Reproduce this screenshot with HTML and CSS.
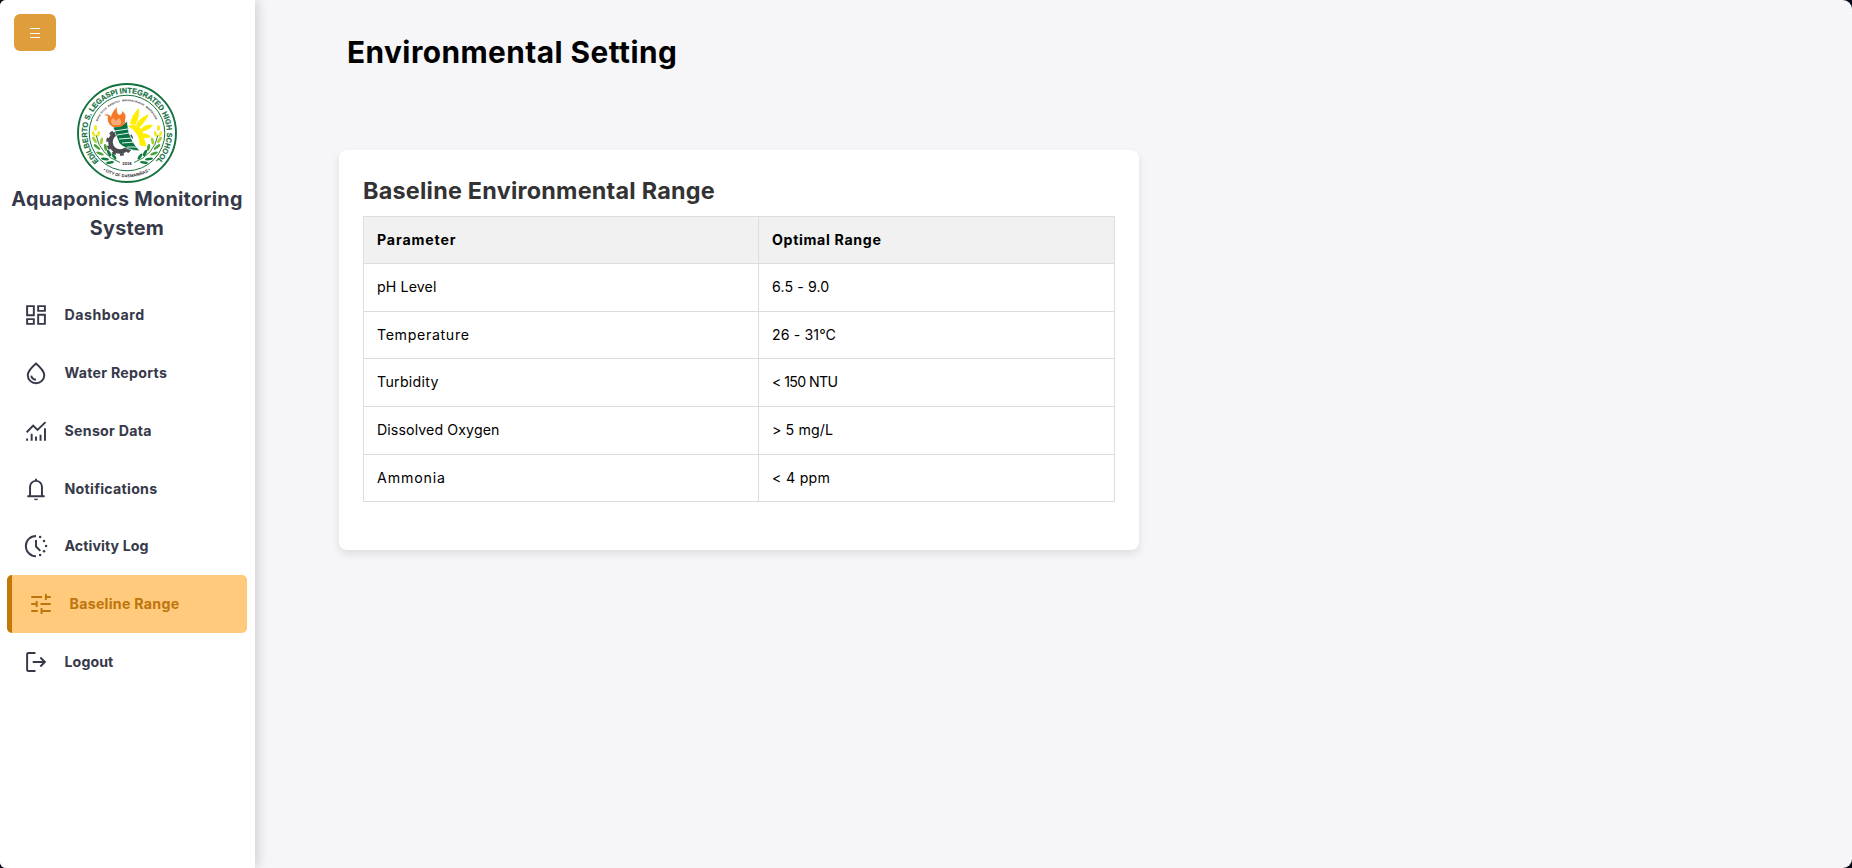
FILE: index.html
```
<!DOCTYPE html>
<html lang="en">
<head>
<meta charset="utf-8">
<title>Environmental Setting</title>
<link rel="stylesheet" href="styles.css">
</head>
<body>
<div class="app">
  <aside class="sidebar">
    <button class="menu-toggle" aria-label="Toggle menu">
      <svg width="12" height="12" viewBox="0 0 12 12"><path d="M1 1.500h10M1 6.500h10M1 10.500h10" stroke="#fff" stroke-width="1"/></svg>
    </button>
    <div class="brand">
      <svg class="seal" viewBox="-50 -50 100 100">
        <defs>
          <path id="ring-name" d="M-28.200 28.200A39.900 39.900 0 1 1 28.200 28.200"/>
          <path id="ring-city" d="M-24 37.200A44.300 44.300 0 0 0 24 37.200"/>
          <path id="ring-motto" d="M-29.500 -11.500A31.600 31.600 0 0 1 29.500 -11.500"/>
          <g id="laurel">
            <path d="M-7 29.500Q-27 22-31 2" fill="none" stroke="#2f8a45" stroke-width="1"/>
            <g fill="#117a3d"><ellipse cx="-13" cy="23.500" rx="3.600" ry="1.400" transform="rotate(55 -13 23.500)"/><ellipse cx="-17" cy="29.500" rx="4" ry="1.300" transform="rotate(-8 -17 29.500)"/><ellipse cx="-18" cy="20" rx="3.600" ry="1.500" transform="rotate(65 -18 20)"/><ellipse cx="-22" cy="26" rx="4" ry="1.300" transform="rotate(8 -22 26)"/></g>
            <g fill="#4ba23a"><ellipse cx="-21.500" cy="14.500" rx="3.500" ry="1.500" transform="rotate(80 -21.500 14.500)"/><ellipse cx="-27" cy="20.500" rx="4" ry="1.400" transform="rotate(22 -27 20.500)"/><ellipse cx="-30" cy="14" rx="4" ry="1.400" transform="rotate(40 -30 14)"/></g>
            <g fill="#a9cf3a"><ellipse cx="-25.500" cy="8" rx="3.500" ry="1.500" transform="rotate(100 -25.500 8)"/><ellipse cx="-32.500" cy="7" rx="3.600" ry="1.500" transform="rotate(55 -32.500 7)"/></g>
            <g fill="#f5e928"><ellipse cx="-28.500" cy="1" rx="3" ry="1.500" transform="rotate(110 -28.500 1)"/><ellipse cx="-33.500" cy="1" rx="3" ry="1.400" transform="rotate(70 -33.500 1)"/><ellipse cx="-31.500" cy="-5" rx="3" ry="1.500" transform="rotate(90 -31.500 -5)"/></g>
          </g>
        </defs>
        <circle r="49" fill="#fff" stroke="#14713f" stroke-width="1.900"/>
        <circle r="37.800" fill="none" stroke="#14713f" stroke-width="1"/>
        <text class="seal-name"><textPath href="#ring-name" textLength="187" lengthAdjust="spacingAndGlyphs">EDILBERTO S. LEGASPI INTEGRATED HIGH SCHOOL</textPath></text>
        <text class="seal-city"><textPath href="#ring-city" textLength="50" lengthAdjust="spacingAndGlyphs">• CITY OF DASMARIÑAS •</textPath></text>
        <text class="seal-motto"><textPath href="#ring-motto" textLength="74" lengthAdjust="spacingAndGlyphs" xml:space="preserve">MAKA-DIYOS   MAKATAO   MAKAKALIKASAN   MAKABANSA</textPath></text>
        <use href="#laurel"/>
        <use href="#laurel" transform="scale(-1 1)"/>
        <path d="M1-7Q8-10 13-5Q19 1 17 12L13 13Q13 0 1-7Z" fill="#ffee00"/>
        <g fill="#ffee00"><path d="M3-9Q4-17 12-25Q13-15 8-8Z"/><path d="M9-8Q12-15 22-19Q19-12 12-5Z"/><path d="M13-3Q17-9 26-8Q23-3 14-1Z"/><path d="M15 1Q20-1 24 4Q19 6 15 4Z"/><path d="M13 6Q20 7 19 13Q14 14 12 9Z"/></g>
        <circle cx="-7" cy="9" r="9.500" fill="none" stroke="#4c4b50" stroke-width="4.500"/>
        <circle cx="-7" cy="9" r="12.500" fill="none" stroke="#4c4b50" stroke-width="2.500" stroke-dasharray="3.900 3.954"/>
        <path d="M-14-6Q-5-6 0-12L2 0Q5 10 13 18Q-2 17-8 10Z" fill="#087344" stroke="#fff" stroke-width=".7"/>
        <path d="M-13-2L1-4M-10 2L2 0M-8 6L5 5M-5 10L8 9M0 14L10 14" stroke="#fff" stroke-width=".9"/>
        <path d="M-14-6Q-21-10-19-17L-23-18Q-18-20-16-16Q-15-21-10-26Q-11-20-8-18Q-4-19-5-22Q0-19-2-13Q-1-8-7-6Z" fill="#f57826"/>
        <path d="M-14-8Q-18-12-14-15L-11-12L-8-15Q-4-11-7-8Z" fill="#fff" opacity=".4"/>
        <text class="seal-year" x="0" y="32" text-anchor="middle">2018</text>
      </svg>
      <div class="brand-name">Aquaponics Monitoring<br>System</div>
    </div>
    <nav class="nav">
      <a class="nav-item"><svg class="icon" viewBox="0 0 24 24"><path d="M3.800 3.800h6.200v8.400H3.800zM14 3.800h6.200v4.400H14zM14 11.800h6.200v8.400H14zM3.800 15.800h6.200v4.400H3.800z"/></svg><span class="label-wide">Dashboard</span></a>
      <a class="nav-item"><svg class="icon" viewBox="0 0 24 24"><path d="M12 3.200C7.600 7 4.400 10.300 4.400 14a7.600 7.400 0 0 0 15.200 0C19.600 10.300 16.400 7 12 3.200Z"/><path d="M7.600 14.500Q8.200 18 12 18.200"/></svg><span>Water Reports</span></a>
      <a class="nav-item"><svg class="icon" viewBox="0 0 24 24"><path d="M3.400 13.200l6-6.200 4 4 7.400-7.200M3.800 21v-2M8 21v-6.500M12 21v-4M16.200 21v-5.500M20.300 21V9.500"/></svg><span>Sensor Data</span></a>
      <a class="nav-item"><svg class="icon" viewBox="0 0 24 24"><path d="M4 18.700h16M6.500 18.500V10a5.500 5.500 0 0 1 11 0v8.500M12 4.300V2.600"/><path d="M10.200 20.900h3.600a1.800 1.500 0 0 1-3.600 0Z" fill="currentColor" stroke="none"/></svg><span>Notifications</span></a>
      <a class="nav-item"><svg class="icon" viewBox="0 0 24 24"><path d="M12 2.700a9.300 9.300 0 0 0 0 18.800M12 6.500v6l4 4"/><g fill="currentColor" stroke="none"><circle cx="15.800" cy="3.700" r="1.150"/><circle cx="19.400" cy="7.300" r="1.150"/><circle cx="21.300" cy="12" r="1.150"/><circle cx="19.400" cy="16.900" r="1.150"/><circle cx="15.800" cy="20.400" r="1.150"/></g></svg><span class="label-tight">Activity Log</span></a>
      <a class="nav-item active"><svg class="icon" viewBox="0 0 24 24"><path d="M3 5.500h10M16.500 5.500H21M16.500 2.800v5.500M3 12h5M8 9.300v5.500M11.500 12H21M3 18.500h6M12.500 15.800v5.500M12.500 18.500H21"/></svg><span>Baseline Range</span></a>
      <a class="nav-item"><svg class="icon" viewBox="0 0 24 24"><path d="M11.500 3.700H5a1.200 1.200 0 0 0-1.200 1.200v14.200A1.200 1.200 0 0 0 5 20.300h6.500M9 12h11M16 7.800l4.200 4.200-4.200 4.200"/></svg><span class="label-tight">Logout</span></a>
    </nav>
  </aside>
  <main class="content">
    <h1 class="page-title">Environmental Setting</h1>
    <section class="card">
      <h2 class="card-title">Baseline Environmental Range</h2>
      <table class="range-table">
        <thead><tr><th class="wider">Parameter</th><th class="wide">Optimal Range</th></tr></thead>
        <tbody>
          <tr class="tall"><td class="slight">pH Level</td><td class="slight">6.5 - 9.0</td></tr>
          <tr><td class="wide">Temperature</td><td class="slight">26 - 31°C</td></tr>
          <tr class="tall"><td>Turbidity</td><td class="tight">&lt; 150 NTU</td></tr>
          <tr class="tall"><td class="slight">Dissolved Oxygen</td><td class="slight">&gt; 5 mg/L</td></tr>
          <tr><td class="wider">Ammonia</td><td>&lt; 4 ppm</td></tr>
        </tbody>
      </table>
    </section>
  </main>
</div>
</body>
</html>
```
FILE: styles.css
```
* { box-sizing: border-box; }
html, body { height: 100%; }
body {
  margin: 0;
  background: #050816;
  font-family: Inter, "Open Sans", sans-serif;
  overflow: hidden;
}
.app {
  display: flex;
  height: 100%;
  background: #f6f6f9;
  border-radius: 6px 9px 9px 6px;
  overflow: hidden;
}
.sidebar {
  flex: 0 0 255px;
  display: flex;
  flex-direction: column;
  padding: 14px 7px 0;
  background: #fff;
  box-shadow: 3px 0 11px rgba(0, 0, 0, .15);
}
.menu-toggle {
  display: flex;
  align-items: center;
  justify-content: center;
  width: 42px;
  height: 37px;
  margin-left: 7px;
  padding: 0;
  border: 0;
  border-radius: 6px;
  background: #e09d3b;
}
.brand {
  display: flex;
  flex-direction: column;
  align-items: center;
  height: 235.600px;
  padding-top: 32px;
  margin-right: 1px;
}
.seal { width: 100px; height: 100px; flex: none; }
.seal text { font-family: "Liberation Sans", Arial, sans-serif; }
.seal .seal-name { font-size: 7.600px; font-weight: bold; fill: #14713f; stroke: #14713f; stroke-width: .2px; }
.seal .seal-city { font-size: 4.200px; font-weight: bold; fill: #222; }
.seal .seal-motto { font-size: 2.700px; font-weight: bold; fill: #333; }
.seal .seal-year { font-size: 4.200px; font-weight: bold; fill: #222; }
.brand-name {
  margin-top: 2px;
  font-size: 19.800px;
  font-weight: 720;
  line-height: 29px;
  letter-spacing: .25px;
  text-align: center;
  white-space: nowrap;
  color: #363949;
}
.nav { display: flex; flex-direction: column; }
.nav-item {
  display: flex;
  align-items: center;
  gap: 16px;
  height: 57.700px;
  padding-left: 15.500px;
  font-size: 14.200px;
  font-weight: 720;
  letter-spacing: .27px;
  color: #363949;
}
.nav-item span { padding-bottom: 1px; }
.nav-item .label-wide { letter-spacing: .5px; }
.nav-item .label-tight { letter-spacing: .08px; }
.nav-item.active {
  border-left: 5px solid #c27803;
  border-radius: 5px;
  margin-right: 1px;
  background: #ffca7c;
  color: #bd750c;
}
.icon {
  width: 26px;
  height: 26px;
  fill: none;
  stroke: currentColor;
  stroke-width: 1.800;
}
.content { flex: 1; padding: 33px 84px 0; }
.page-title {
  height: 117px;
  margin: 0 0 0 8px;
  font-size: 29.800px;
  font-weight: 730;
  line-height: 38px;
  letter-spacing: .45px;
  color: #000;
}
.card {
  width: 800px;
  height: 400px;
  padding: 24px;
  border-radius: 8px;
  background: #fff;
  box-shadow: 0 4px 8px rgba(0, 0, 0, .1);
}
.card-title {
  margin: 0;
  height: 42px;
  font-size: 23.400px;
  font-weight: 730;
  line-height: 34px;
  letter-spacing: .23px;
  color: #333;
}
.range-table {
  width: 752px;
  table-layout: fixed;
  border-collapse: collapse;
  font-size: 14.200px;
  letter-spacing: .28px;
}
.range-table th, .range-table td {
  padding: 0 13px 2px;
  border: 1px solid #ddd;
  text-align: left;
}
.range-table tr { height: 47px; }
.range-table tr.tall { height: 48px; }
.range-table th { background: #f1f1f1; }
.range-table th:first-child { width: 395px; }
.range-table .slight { letter-spacing: .1px; }
.range-table .wide { letter-spacing: .65px; }
.range-table .wider { letter-spacing: .85px; }
.range-table .tight { letter-spacing: -.62px; }
```
